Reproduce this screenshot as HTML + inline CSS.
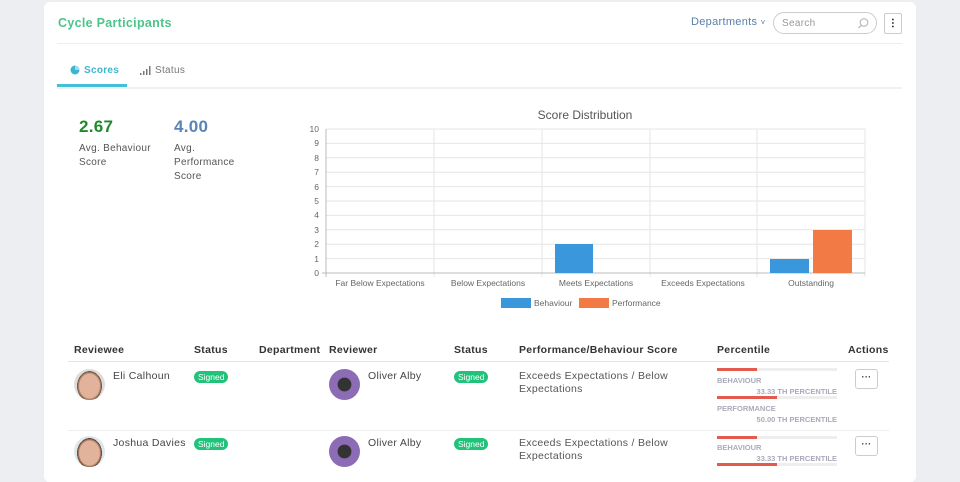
<!DOCTYPE html>
<html><head><meta charset="utf-8"><style>
*{box-sizing:border-box;margin:0;padding:0}
body{width:960px;height:466px;overflow:hidden;background:#eceef1;font-family:"Liberation Sans",sans-serif;position:relative;letter-spacing:0.3px}
.card{position:absolute;left:44px;top:2px;width:872px;height:480px;background:#fff;border-radius:6px}
.a{position:absolute;white-space:nowrap}
.th{font-weight:bold;font-size:10.5px;color:#333;top:344px}
.nm{font-size:10.5px;color:#444;}
.badge{position:absolute;background:#21c27a;color:#fff;font-size:8.5px;border-radius:6px;padding:1px 4px;height:12px;line-height:10px;letter-spacing:0}
.av{position:absolute;width:31px;height:31px;border-radius:50%}
.pl{font-size:7.5px;color:#aab;font-weight:bold;letter-spacing:0}
.bar{position:absolute;height:3px;background:#eee;width:120px}
.bar i{display:block;height:3px;background:#e55a4e}
.act{position:absolute;width:23px;height:20px;border:1px solid #ccc;border-radius:3px;font-size:9px;text-align:center;line-height:14px;font-weight:bold;color:#333}
</style></head><body>
<div class="card"></div>
<div class="a" style="left:58px;top:16px;font-size:12.5px;color:#4cc48a;font-weight:bold">Cycle Participants</div>
<div class="a" style="left:691px;top:16px;font-size:11px;color:#5a7ea8">Departments <span style="font-size:8px">˅</span></div>
<div class="a" style="left:773px;top:12px;width:104px;height:22px;border:1px solid #ccc;border-radius:11px;font-size:10px;color:#999;padding:5px 8px">Search<svg style="position:absolute;right:7px;top:5px" width="11" height="11"><circle cx="6" cy="4.5" r="3.8" fill="none" stroke="#bbb" stroke-width="1.2"/><line x1="3.3" y1="7.2" x2="0.5" y2="10" stroke="#bbb" stroke-width="1.3"/></svg></div>
<div class="a" style="left:884px;top:13px;width:18px;height:21px;border:1px solid #ccc;border-radius:2px;text-align:center;font-size:10px;line-height:19px;font-weight:bold">⋮</div>
<div class="a" style="left:57px;top:43px;width:845px;height:1px;background:#eee"></div>
<svg class="a" style="left:70px;top:65px" width="10" height="10"><circle cx="5" cy="5" r="4.5" fill="#3cb6d0"/><path d="M5 5 L5 0.5 A4.5 4.5 0 0 1 9.5 5 Z" fill="#fff" opacity=".5"/></svg>
<div class="a" style="left:84px;top:65px;font-size:10px;color:#3cb6d0;font-weight:bold">Scores</div>
<svg class="a" style="left:140px;top:66px" width="11" height="9"><rect x="0" y="7" width="1.5" height="2" fill="#777"/><rect x="3" y="5" width="1.5" height="4" fill="#777"/><rect x="6" y="3" width="1.5" height="6" fill="#777"/><rect x="9" y="0" width="1.5" height="9" fill="#777"/></svg>
<div class="a" style="left:155px;top:65px;font-size:10px;color:#777">Status</div>
<div class="a" style="left:57px;top:84px;width:70px;height:3px;background:#45c1d6"></div>
<div class="a" style="left:57px;top:87px;width:845px;height:2px;background:#f0f0f0"></div>
<div class="a" style="left:79px;top:117px;font-size:17px;color:#1e8a2b;font-weight:bold">2.67</div>
<div class="a" style="left:79px;top:142px;font-size:10px;color:#555;line-height:14px">Avg. Behaviour<br>Score</div>
<div class="a" style="left:174px;top:117px;font-size:17px;color:#5a84b4;font-weight:bold">4.00</div>
<div class="a" style="left:174px;top:142px;font-size:10px;color:#555;line-height:14px">Avg.<br>Performance<br>Score</div>
<svg class="a" style="left:0;top:0;letter-spacing:0" width="960" height="320" font-family="Liberation Sans" font-size="8.5" fill="#666">
<text x="585" y="119" font-size="12" text-anchor="middle" fill="#555">Score Distribution</text>
<g stroke="#e6e6e6">
<line x1="326" y1="129" x2="865" y2="129"/><line x1="326" y1="143.4" x2="865" y2="143.4"/><line x1="326" y1="157.8" x2="865" y2="157.8"/><line x1="326" y1="172.2" x2="865" y2="172.2"/><line x1="326" y1="186.6" x2="865" y2="186.6"/><line x1="326" y1="201" x2="865" y2="201"/><line x1="326" y1="215.4" x2="865" y2="215.4"/><line x1="326" y1="229.8" x2="865" y2="229.8"/><line x1="326" y1="244.2" x2="865" y2="244.2"/><line x1="326" y1="258.6" x2="865" y2="258.6"/>
<line x1="434" y1="129" x2="434" y2="277"/><line x1="542" y1="129" x2="542" y2="277"/><line x1="650" y1="129" x2="650" y2="277"/><line x1="757" y1="129" x2="757" y2="277"/><line x1="865" y1="129" x2="865" y2="277"/></g>
<line x1="326" y1="129" x2="326" y2="277" stroke="#bbb"/><line x1="322" y1="273" x2="865" y2="273" stroke="#bbb"/>
<g text-anchor="end"><text x="319" y="132">10</text><text x="319" y="146">9</text><text x="319" y="161">8</text><text x="319" y="175">7</text><text x="319" y="190">6</text><text x="319" y="204">5</text><text x="319" y="218">4</text><text x="319" y="233">3</text><text x="319" y="247">2</text><text x="319" y="262">1</text><text x="319" y="276">0</text></g>
<g text-anchor="middle"><text x="380" y="286">Far Below Expectations</text><text x="488" y="286">Below Expectations</text><text x="596" y="286">Meets Expectations</text><text x="703" y="286">Exceeds Expectations</text><text x="811" y="286">Outstanding</text></g>
<rect x="555" y="244" width="38" height="29" fill="#3a97dc"/>
<rect x="770" y="259" width="39" height="14" fill="#3a97dc"/>
<rect x="813" y="230" width="39" height="43" fill="#f27a45"/>
<rect x="501" y="298" width="30" height="10" fill="#3a97dc"/><text x="534" y="306">Behaviour</text>
<rect x="579" y="298" width="30" height="10" fill="#f27a45"/><text x="612" y="306">Performance</text>
</svg>
<div class="a th" style="left:74px">Reviewee</div>
<div class="a th" style="left:194px">Status</div>
<div class="a th" style="left:259px">Department</div>
<div class="a th" style="left:329px">Reviewer</div>
<div class="a th" style="left:454px">Status</div>
<div class="a th" style="left:519px">Performance/Behaviour Score</div>
<div class="a th" style="left:717px">Percentile</div>
<div class="a th" style="left:848px">Actions</div>
<div class="a" style="left:68px;top:361px;width:821px;height:1px;background:#e5e5e5"></div>
<div class="a" style="left:68px;top:430px;width:821px;height:1px;background:#eee"></div>

<div class="av" style="left:74px;top:369px;background:radial-gradient(ellipse 40% 48% at 50% 55%,#e2b39a 80%,#6a4a35 100%,#ddd 101%)"></div>
<div class="a nm" style="left:113px;top:370px">Eli Calhoun</div>
<div class="badge" style="left:194px;top:371px">Signed</div>
<div class="av" style="left:329px;top:369px;background:radial-gradient(circle at 50% 50%,#333 30%,#8b6cb5 33%)"></div>
<div class="a nm" style="left:368px;top:370px">Oliver Alby</div>
<div class="badge" style="left:454px;top:371px">Signed</div>
<div class="a nm" style="left:519px;top:370px;line-height:13px;color:#555">Exceeds Expectations / Below<br>Expectations</div>
<div class="bar" style="left:717px;top:368px"><i style="width:40px"></i></div>
<div class="a pl" style="left:717px;top:376px">BEHAVIOUR</div>
<div class="a pl" style="left:717px;top:387px;width:120px;text-align:right">33.33 TH PERCENTILE</div>
<div class="bar" style="left:717px;top:396px"><i style="width:60px"></i></div>
<div class="a pl" style="left:717px;top:404px">PERFORMANCE</div>
<div class="a pl" style="left:717px;top:415px;width:120px;text-align:right">50.00 TH PERCENTILE</div>
<div class="act" style="left:855px;top:369px">···</div>

<div class="av" style="left:74px;top:436px;background:radial-gradient(ellipse 40% 48% at 50% 55%,#e2b39a 80%,#5a3a25 100%,#dde6ee 101%)"></div>
<div class="a nm" style="left:113px;top:437px">Joshua Davies</div>
<div class="badge" style="left:194px;top:438px">Signed</div>
<div class="av" style="left:329px;top:436px;background:radial-gradient(circle at 50% 50%,#333 30%,#8b6cb5 33%)"></div>
<div class="a nm" style="left:368px;top:437px">Oliver Alby</div>
<div class="badge" style="left:454px;top:438px">Signed</div>
<div class="a nm" style="left:519px;top:437px;line-height:13px;color:#555">Exceeds Expectations / Below<br>Expectations</div>
<div class="bar" style="left:717px;top:436px"><i style="width:40px"></i></div>
<div class="a pl" style="left:717px;top:443px">BEHAVIOUR</div>
<div class="a pl" style="left:717px;top:454px;width:120px;text-align:right">33.33 TH PERCENTILE</div>
<div class="bar" style="left:717px;top:463px"><i style="width:60px"></i></div>
<div class="act" style="left:855px;top:436px">···</div>
</body></html>
